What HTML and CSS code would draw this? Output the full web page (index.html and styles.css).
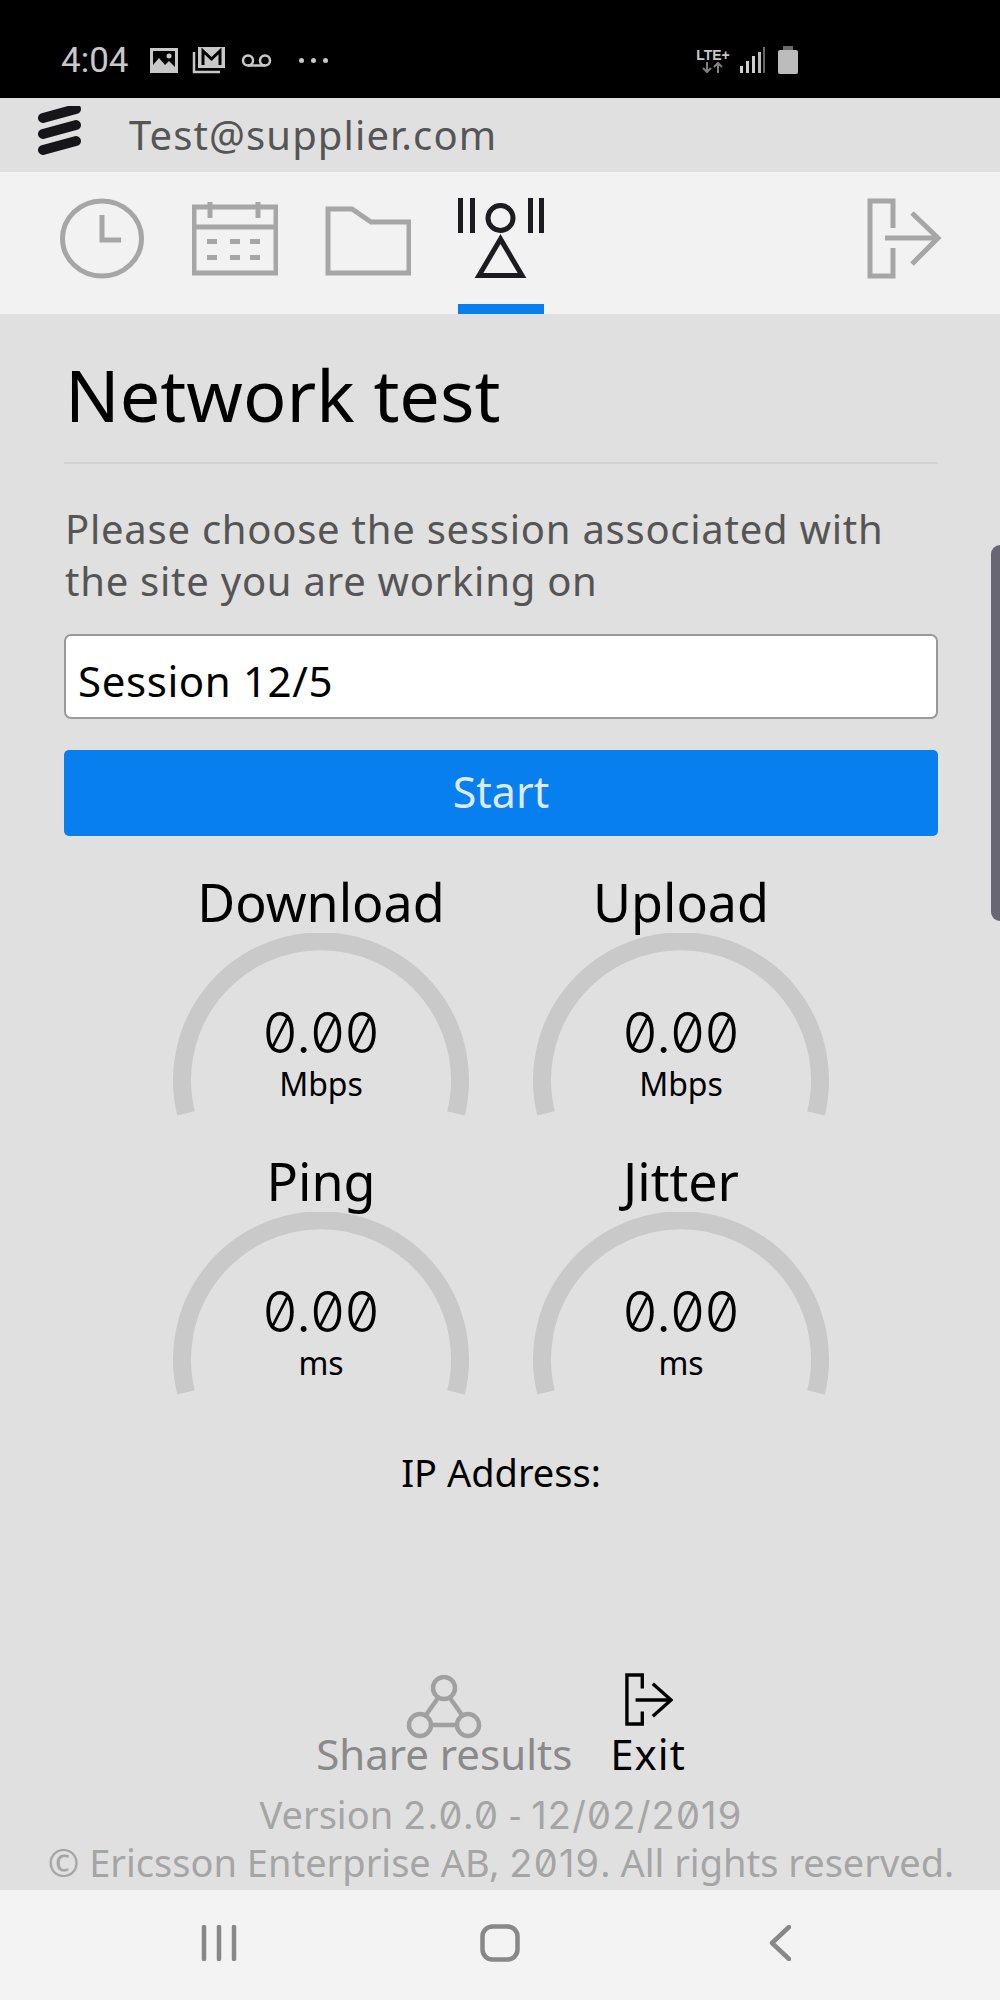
FILE: index.html
```html
<!DOCTYPE html>
<html>
<head>
<title>Network test</title>
<link rel="stylesheet" href="styles.css">
</head>
<body>

<!-- Phone status bar -->
<div class="status-bar">
    <span class="clock-text">4:04</span>
    <svg class="st-icon st-pic" viewBox="0 0 28 25"><path fill="#c8c8c8" fill-rule="evenodd" d="M0 0H28V25H0ZM3 3V17L9 10L15 17L19 13L25 19V3Z"/><circle cx="19" cy="8" r="2.5" fill="#c8c8c8"/></svg>
    <svg class="st-icon st-mail" viewBox="0 0 34 28"><path fill="none" stroke="#c8c8c8" stroke-width="2.5" d="M2 6V26H28"/><rect x="6" y="1" width="27" height="21" fill="#c8c8c8"/><path fill="none" stroke="#000" stroke-width="3" d="M11 19V5L19.500 13L28 5V19"/></svg>
    <svg class="st-icon st-vm" viewBox="0 0 31 13"><g fill="none" stroke="#c8c8c8" stroke-width="2.500"><circle cx="7" cy="6.500" r="5"/><circle cx="24" cy="6.500" r="5"/><path d="M7 11.500H24"/></g></svg>
    <div class="st-dots"><i></i><i></i><i></i></div>
    <div class="st-lte">
        <span>LTE+</span>
        <svg viewBox="0 0 22 11" width="22" height="11"><path fill="none" stroke="#7f7f7f" stroke-width="2" d="M5 0V10M1 6L5 10L9 6M16 11V1M12 5L16 1L20 5"/></svg>
    </div>
    <svg class="st-icon st-signal" viewBox="0 0 26 26"><path fill="#d0d0d0" d="M1 19h3v7H1zM7 14h3v12H7zM13 9h3v17h-3z"/><path fill="#d0d0d0" d="M19 5h3v21h-3z" opacity=".9"/><path fill="#666" d="M24 0h2v26h-2z"/></svg>
    <svg class="st-icon st-batt" viewBox="0 0 20 28"><path fill="#6b6b6b" d="M5 0H15V4H5Z"/><rect y="4" width="20" height="24" rx="2" fill="#bcbcbc"/></svg>
</div>

<!-- User strip -->
<div class="user-bar">
    <svg class="logo" viewBox="0 0 44 50"><g stroke="#16161a" stroke-width="10" stroke-linecap="round"><path d="M5 12L38 3M5 28L38 19M5 44L38 35"/></g></svg>
    <span class="user-name">Test@supplier.com</span>
</div>

<!-- Tabs -->
<div class="tab-bar">
    <a class="tab">
        <svg viewBox="0 0 86 90"><ellipse cx="43" cy="48.500" rx="39.500" ry="37.500" class="ic"/><path class="ic" d="M43 25V50H62"/></svg>
    </a>
    <a class="tab">
        <svg viewBox="0 0 86 90"><path class="ic" d="M2 17H84V83H2ZM2 37H84M18 12V28M66 12V28"/><path fill="#a6a6a6" d="M15 49h10v5H15zM38 49h10v5H38zM58 49h10v5H58zM15 65h10v5H15zM38 65h10v5H38zM58 65h10v5H58z"/></svg>
    </a>
    <a class="tab">
        <svg viewBox="0 0 86 90"><path class="ic" d="M3 19H27L46 32H84V83H3Z"/></svg>
    </a>
    <a class="tab active">
        <svg viewBox="0 0 86 90"><path fill="#1c1c20" d="M0 8h5v35H0zM12 8h5v35h-5zM70 8h5v35h-5zM81 8h5v35h-5z"/><circle cx="42.500" cy="28" r="12.500" class="ic-on"/><path class="ic-on" d="M42.500 49L21 85.500H64Z"/></svg>
    </a>
    <a class="tab tab-exit">
        <svg viewBox="0 0 86 90"><path class="ic" d="M33 38V11H10V86H33V58M25 48H77M52 23L78 48L52 74"/></svg>
    </a>
</div>

<div class="scroll-thumb"></div>

<div class="container">
    <div class="title">Network test</div>
    <p class="intro">Please choose the session associated with<br>the site you are working on</p>

    <div class="session-box">Session 12/5</div>
    <div class="start-btn">Start</div>

    <div class="gauges">
        <div class="gauge">
            <div class="gauge-name">Download</div>
            <div class="gauge-dial">
                <svg viewBox="0 0 300 200"><path class="arc" d="M15 180.400A139 139 0 1 1 285 180.400"/></svg>
                <div class="gauge-value">0.00</div>
                <div class="gauge-unit">Mbps</div>
            </div>
        </div>
        <div class="gauge">
            <div class="gauge-name">Upload</div>
            <div class="gauge-dial">
                <svg viewBox="0 0 300 200"><path class="arc" d="M15 180.400A139 139 0 1 1 285 180.400"/></svg>
                <div class="gauge-value">0.00</div>
                <div class="gauge-unit">Mbps</div>
            </div>
        </div>
        <div class="gauge">
            <div class="gauge-name">Ping</div>
            <div class="gauge-dial">
                <svg viewBox="0 0 300 200"><path class="arc" d="M15 180.400A139 139 0 1 1 285 180.400"/></svg>
                <div class="gauge-value">0.00</div>
                <div class="gauge-unit">ms</div>
            </div>
        </div>
        <div class="gauge">
            <div class="gauge-name">Jitter</div>
            <div class="gauge-dial">
                <svg viewBox="0 0 300 200"><path class="arc" d="M15 180.400A139 139 0 1 1 285 180.400"/></svg>
                <div class="gauge-value">0.00</div>
                <div class="gauge-unit">ms</div>
            </div>
        </div>
    </div>

    <div class="ip-line">IP Address:</div>

    <div class="actions">
        <a class="action action-off">
            <svg class="share-icon" viewBox="0 0 76 64" width="76" height="64"><g fill="none" stroke="#a0a0a0" stroke-width="4.500"><circle cx="38" cy="13" r="11"/><circle cx="14" cy="50" r="11"/><circle cx="62" cy="50" r="11"/><path d="M32 23L20 40M44 23L56 40M25 50H51"/></g></svg>
            <span>Share results</span>
        </a>
        <a class="action action-exit">
            <svg class="exit-icon" viewBox="0 0 50 56" width="48" height="54"><path fill="none" stroke="#000" stroke-width="3.500" d="M18 17V3H2V54H18V41M11 29H48M29 12L48 29L29 46"/></svg>
            <span>Exit</span>
        </a>
    </div>

    <div class="footer-text">Version <span class="num">2.0.0</span> - <span class="num">12/02/2019</span></div>
    <div class="footer-text">© Ericsson Enterprise AB, <span class="num">2019</span>. All rights reserved.</div>
</div>

<!-- Phone navigation keys -->
<div class="nav-keys">
    <svg viewBox="0 0 36 36" width="36" height="36"><path class="key" d="M3 2V34M18 2V34M33 2V34"/></svg>
    <svg class="key-home" viewBox="0 0 40 38" width="40" height="38"><rect class="key" x="2.500" y="2.500" width="35" height="33" rx="10"/></svg>
    <svg class="key-back" viewBox="0 0 22 36" width="22" height="36"><path class="key" d="M20 2L3 18L20 34"/></svg>
</div>

</body>
</html>
```

FILE: styles.css
```css
* {
    box-sizing: border-box;
}

body {
    margin: 0;
    width: 1000px;
    height: 2000px;
    position: relative;
    display: flex;
    flex-direction: column;
    background-color: #e0e0e0;
    font-family: "Noto Sans", sans-serif;
    color: #000;
    overflow: hidden;
}

svg {
    display: block;
}

/* status bar */
.status-bar {
    height: 98px;
    flex: none;
    background: #000;
    display: flex;
    align-items: center;
    padding: 22px 0 0 61px;
    color: #c8c8c8;
}

.clock-text {
    font-family: Roboto, sans-serif;
    font-size: 35px;
    width: 89px;
}

.st-pic {
    width: 28px;
    height: 25px;
}

.st-mail {
    width: 34px;
    height: 28px;
    margin-left: 14px;
}

.st-vm {
    width: 31px;
    height: 13px;
    margin-left: 15px;
}

.st-dots {
    display: flex;
    gap: 7px;
    margin-left: 27px;
}

.st-dots i {
    width: 5px;
    height: 5px;
    border-radius: 50%;
    background: #c8c8c8;
}

.st-lte {
    margin-left: 367px;
    width: 36px;
    display: flex;
    flex-direction: column;
    align-items: center;
    font: bold 14px/14px "Liberation Sans", sans-serif;
    color: #c8c8c8;
}

.st-signal {
    width: 26px;
    height: 26px;
    margin-left: 8px;
}

.st-batt {
    width: 20px;
    height: 28px;
    margin-left: 13px;
}

/* user strip */
.user-bar {
    height: 74px;
    flex: none;
    display: flex;
    align-items: center;
    padding-left: 38px;
    background: #e0e0e0;
}

.logo {
    width: 44px;
    height: 50px;
    margin-top: -8px;
}

.user-name {
    margin-left: 47px;
    padding-bottom: 2px;
    font-size: 40px;
    letter-spacing: 1.1px;
    color: #555;
}

/* tabs */
.tab-bar {
    height: 142px;
    flex: none;
    display: flex;
    gap: 47px;
    padding: 0 54px 0 59px;
    background: #f2f2f2;
}

.tab {
    width: 86px;
    padding-top: 18px;
}

.tab.active {
    border-bottom: 10px solid #087fef;
}

.tab-exit {
    margin-left: auto;
}

.ic, .ic-on {
    fill: none;
    stroke-width: 5;
}

.ic {
    stroke: #a6a6a6;
}

.ic-on {
    stroke: #1c1c20;
}

.scroll-thumb {
    position: absolute;
    top: 545px;
    right: 0;
    width: 9px;
    height: 376px;
    background: #676672;
    border-radius: 9px 0 0 9px;
}

/* page body */
.container {
    flex: 1;
    padding: 0 62px 3px 64px;
    display: flex;
    flex-direction: column;
}

.title {
    font-size: 72px;
    line-height: 100px;
    padding: 30px 0 18px 1px;
    border-bottom: 2px solid #d2d2d2;
    height: 150px;
}

.intro {
    margin: 39px 0 0 1px;
    font-size: 40px;
    letter-spacing: 0.75px;
    line-height: 51.500px;
    color: #555;
}

.session-box {
    margin-top: 28px;
    height: 85px;
    padding-left: 12px;
    line-height: 90px;
    font-size: 42px;
    letter-spacing: 0.6px;
    background: #fff;
    border: 2px solid #999;
    border-radius: 7px;
}

.start-btn {
    margin-top: 31px;
    height: 86px;
    line-height: 84px;
    text-align: center;
    font-size: 43px;
    color: #dbe9f8;
    background: #087fef;
    border-radius: 5px;
}

.gauges {
    margin-top: 35px;
    display: grid;
    grid-template-columns: 360px 360px;
    justify-content: center;
    row-gap: 17px;
}

.gauge {
    text-align: center;
}

.gauge-name {
    font-size: 52px;
    line-height: 62px;
}

.gauge-dial {
    position: relative;
    width: 300px;
    height: 200px;
    margin: 0 auto;
}

.arc {
    fill: none;
    stroke: #c9c9c9;
    stroke-width: 18;
}

/* Inter's zero feature gives the slashed zero */
.gauge-value {
    position: absolute;
    top: 75px;
    left: 0;
    right: 0;
    font-family: Inter, sans-serif;
    font-size: 56px;
    font-weight: 350;
    line-height: 50px;
    font-feature-settings: "zero";
}

.gauge-unit {
    position: absolute;
    top: 133px;
    left: 0;
    right: 0;
    font-size: 32px;
    line-height: 36px;
}

.ip-line {
    margin-top: 35px;
    text-align: center;
    font-size: 38px;
    line-height: 50px;
}

/* share and exit */
.actions {
    margin-top: auto;
    margin-bottom: 12px;
    display: flex;
    justify-content: center;
    gap: 38px;
}

.action {
    display: flex;
    flex-direction: column;
    align-items: center;
    justify-content: flex-end;
    font-size: 42px;
    line-height: 50px;
}

.action-off {
    color: #8a8a8a;
}

.action-exit {
    letter-spacing: 1px;
}

.share-icon {
    margin-bottom: -10px;
}

.exit-icon {
    margin: 0 0 3px 1px;
}

/* the copyright line is wider than the column, so let it run into the gutters */
.footer-text {
    margin: 0 -40px;
    text-align: center;
    font-size: 38px;
    line-height: 47px;
    color: #a5a5a5;
    white-space: nowrap;
}

.num {
    font-family: Inter, sans-serif;
    letter-spacing: 1.200px;
    font-feature-settings: "zero";
}

/* phone keys */
.nav-keys {
    height: 110px;
    flex: none;
    display: flex;
    align-items: center;
    padding: 0 0 4px 201px;
    background: #f3f3f3;
}

.key-home {
    margin-left: 243px;
}

.key-back {
    margin-left: 249px;
}

.key {
    fill: none;
    stroke: #888;
    stroke-width: 4.500;
    stroke-linecap: round;
    stroke-linejoin: round;
}
```
